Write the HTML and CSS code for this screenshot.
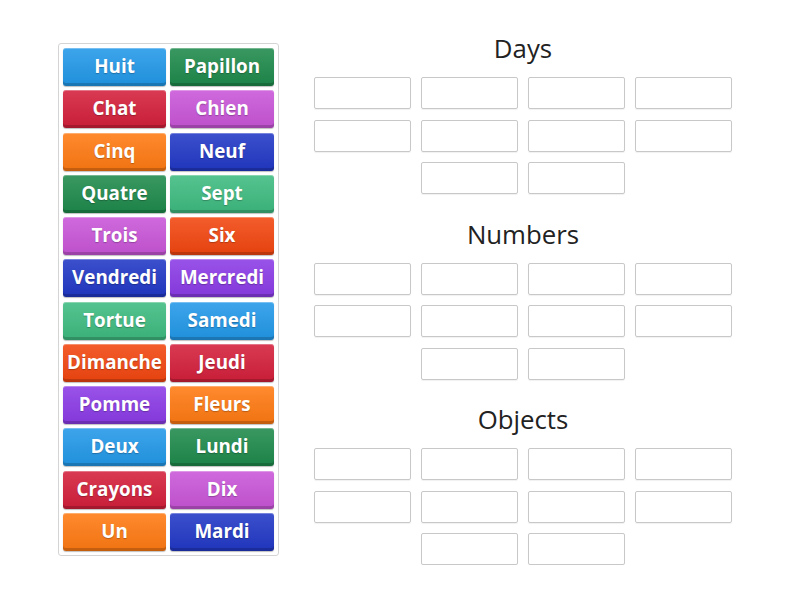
FILE: index.html
```html
<!DOCTYPE html>
<html>
<head>
<meta charset="utf-8">
<link rel="stylesheet" href="styles.css">
</head>
<body>
<div class="page">
  <div class="bank">
    <div class="tile blue">Huit</div>
    <div class="tile dgreen">Papillon</div>
    <div class="tile red">Chat</div>
    <div class="tile orchid">Chien</div>
    <div class="tile orange">Cinq</div>
    <div class="tile dblue">Neuf</div>
    <div class="tile dgreen">Quatre</div>
    <div class="tile sea">Sept</div>
    <div class="tile orchid">Trois</div>
    <div class="tile ored">Six</div>
    <div class="tile dblue">Vendredi</div>
    <div class="tile purple">Mercredi</div>
    <div class="tile sea">Tortue</div>
    <div class="tile blue">Samedi</div>
    <div class="tile ored">Dimanche</div>
    <div class="tile red">Jeudi</div>
    <div class="tile purple">Pomme</div>
    <div class="tile orange">Fleurs</div>
    <div class="tile blue">Deux</div>
    <div class="tile dgreen">Lundi</div>
    <div class="tile red">Crayons</div>
    <div class="tile orchid">Dix</div>
    <div class="tile orange">Un</div>
    <div class="tile dblue">Mardi</div>
  </div>
  <div class="groups">
    <section class="group">
      <h2 class="title">Days</h2>
      <div class="slots">
        <div class="slot"></div><div class="slot"></div><div class="slot"></div><div class="slot"></div>
        <div class="slot"></div><div class="slot"></div><div class="slot"></div><div class="slot"></div>
        <div class="slot"></div><div class="slot"></div>
      </div>
    </section>
    <section class="group">
      <h2 class="title">Numbers</h2>
      <div class="slots">
        <div class="slot"></div><div class="slot"></div><div class="slot"></div><div class="slot"></div>
        <div class="slot"></div><div class="slot"></div><div class="slot"></div><div class="slot"></div>
        <div class="slot"></div><div class="slot"></div>
      </div>
    </section>
    <section class="group">
      <h2 class="title">Objects</h2>
      <div class="slots">
        <div class="slot"></div><div class="slot"></div><div class="slot"></div><div class="slot"></div>
        <div class="slot"></div><div class="slot"></div><div class="slot"></div><div class="slot"></div>
        <div class="slot"></div><div class="slot"></div>
      </div>
    </section>
  </div>
</div>
</body>
</html>
```
FILE: styles.css
```css
html, body {
  margin: 0;
  padding: 0;
  background: #fff;
  font-family: "Open Sans", "Liberation Sans", sans-serif;
}
.page {
  display: flex;
  align-items: flex-start;
  padding: 31px 0 0 58px;
}
.bank {
  margin-top: 12px;
  display: grid;
  grid-template-columns: 103px 104px;
  column-gap: 4px;
  row-gap: 4.27px;
  padding: 4px;
  border: 1px solid #d4d4d4;
  border-radius: 3px;
}
.tile {
  height: 38px;
  border-radius: 3px;
  color: #fff;
  font-weight: 700;
  font-size: 18.8px;
  line-height: 36px;
  text-align: center;
  white-space: nowrap;
  text-shadow: 0 1px 1px rgba(0,0,0,0.25);
  box-shadow: inset 0 1px 0 rgba(255,255,255,0.3), inset 0 -3px 0 rgba(0,0,0,0.18), 0 1px 1px rgba(0,0,0,0.25);
  background-image: linear-gradient(rgba(255,255,255,0.12), rgba(0,0,0,0.06));
}
.blue { background-color: #2298e8; }
.dgreen { background-color: #1e8a4b; }
.red { background-color: #d41f3b; }
.orchid { background-color: #c955d8; }
.orange { background-color: #ff7a12; }
.dblue { background-color: #2138c6; }
.sea { background-color: #3ebb80; }
.ored { background-color: #f2460f; }
.purple { background-color: #8b3be6; }

.groups {
  margin-left: 34px;
  width: 420px;
  display: flex;
  flex-direction: column;
  gap: 22.5px;
}
.group {
  display: flex;
  flex-direction: column;
}
.title {
  margin: 0 0 12px 0;
  height: 34px;
  font-size: 25.8px;
  line-height: 34px;
  font-weight: 400;
  color: #222;
  text-align: center;
}
.slots {
  display: flex;
  flex-wrap: wrap;
  justify-content: center;
  column-gap: 10.3px;
  row-gap: 10.5px;
}
.slot {
  box-sizing: border-box;
  width: 97px;
  height: 32px;
  border: 1px solid #c8c8c8;
  border-radius: 2px;
  box-shadow: 0 1px 1px rgba(0,0,0,0.06);
}
```
